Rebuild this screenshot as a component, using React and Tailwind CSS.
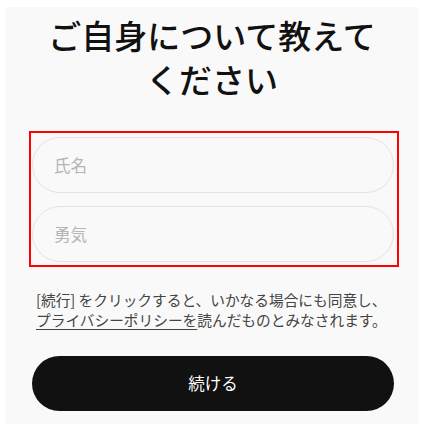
export default function App() {
  return (
    <div className="bg-white w-[424px] h-[433px] pt-[7px] px-[5px]" style={{ fontFamily: '"Noto Sans CJK JP", "Noto Sans", sans-serif' }}>
      <div className="bg-[#f9f9f9] h-[417px] flex flex-col">
        <h1 className="mt-[6px] text-center text-[33px] leading-[44px] font-medium text-[#111]">
          ご自身について教えて
          <br />
          ください
        </h1>
        <div className="mt-[30px] ml-[24px] w-[370px] border-2 border-[#ff0000] pt-[4px] pb-[3px] pl-px pr-[3px] flex flex-col gap-[13px]">
          <div className="h-[56px] rounded-full border border-[#e2e2e2] bg-[#f9f9f9] flex items-center pl-[21px] text-[16.5px] text-[#b5b5b5]">
            氏名
          </div>
          <div className="h-[56px] rounded-full border border-[#e2e2e2] bg-[#f9f9f9] flex items-center pl-[21px] text-[16.5px] text-[#b5b5b5]">
            勇気
          </div>
        </div>
        <p className="mt-[23px] ml-[31px] text-[14.7px] leading-[20px] text-[#444]">
          [続行] をクリックすると、いかなる場合にも同意し、
          <br />
          <span className="underline underline-offset-[3px]">プライバシーポリシーを</span>読んだものとみなされます。
        </p>
        <button className="mt-[26px] ml-[27px] w-[362px] h-[55px] rounded-full bg-[#111] text-white text-[16.5px] flex items-center justify-center">
          続ける
        </button>
      </div>
    </div>
  );
}
